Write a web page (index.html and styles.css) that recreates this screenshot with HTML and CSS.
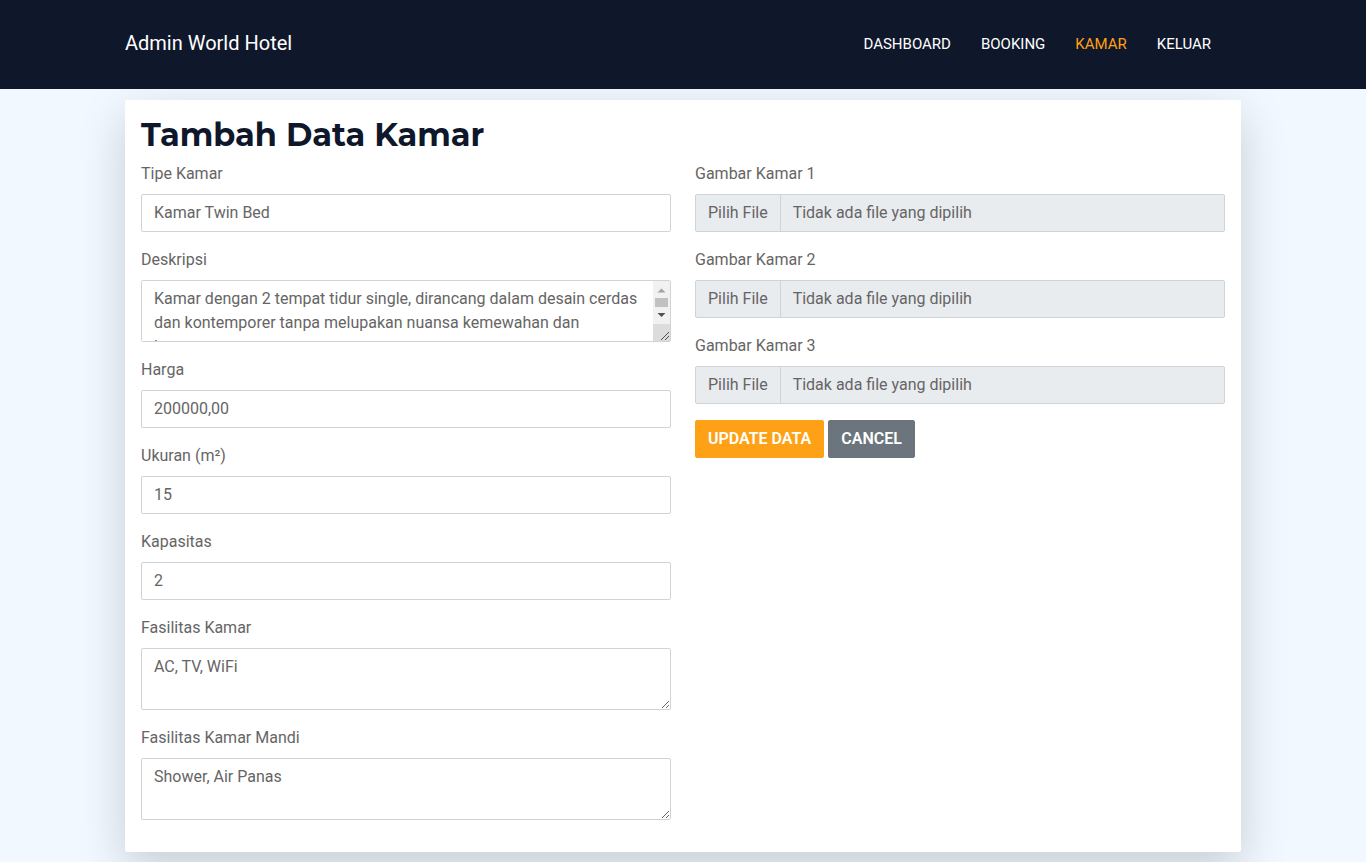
FILE: index.html
```html
<!DOCTYPE html>
<html lang="id">
<head>
<meta charset="utf-8">
<meta name="viewport" content="width=device-width, initial-scale=1">
<title>Admin World Hotel</title>
<link rel="stylesheet" href="styles.css">
</head>
<body>
<header class="site-header">
  <div class="container site-header-inner">
    <a class="brand" href="#">Admin World Hotel</a>
    <nav class="nav">
      <a class="nav-link" href="#">Dashboard</a>
      <a class="nav-link" href="#">Booking</a>
      <a class="nav-link active" href="#">Kamar</a>
      <a class="nav-link" href="#">Keluar</a>
    </nav>
  </div>
</header>
<main class="container">
  <section class="card">
    <h1 class="title">Tambah Data Kamar</h1>
    <form class="form">
      <div class="column">
        <div class="field">
          <label for="tipe">Tipe Kamar</label>
          <input class="control" id="tipe" type="text" value="Kamar Twin Bed">
        </div>
        <div class="field">
          <label for="deskripsi">Deskripsi</label>
          <div class="scroll-box">
            <textarea class="control area scrolling" id="deskripsi">Kamar dengan 2 tempat tidur single, dirancang dalam desain cerdas dan kontemporer tanpa melupakan nuansa kemewahan dan kenyamanan.</textarea>
            <svg class="scrollbar" width="17" height="60" viewBox="0 0 17 60" aria-hidden="true">
              <rect width="17" height="43" fill="#f1f1f1"/>
              <path d="M4.500 11.500L8.500 7.500L12.500 11.500Z" fill="#a3a3a3"/>
              <rect x="2" y="17" width="13" height="9" fill="#c1c1c1"/>
              <path d="M4.500 32L12.500 32L8.500 36Z" fill="#505050"/>
              <rect y="43" width="17" height="17" fill="#dcdcdc"/>
              <path d="M8 59L16 51M12 59L16 55" stroke="#505050" fill="none"/>
            </svg>
          </div>
        </div>
        <div class="field">
          <label for="harga">Harga</label>
          <input class="control" id="harga" type="text" value="200000,00">
        </div>
        <div class="field">
          <label for="ukuran">Ukuran (m²)</label>
          <input class="control" id="ukuran" type="text" value="15">
        </div>
        <div class="field">
          <label for="kapasitas">Kapasitas</label>
          <input class="control" id="kapasitas" type="text" value="2">
        </div>
        <div class="field">
          <label for="fasilitas">Fasilitas Kamar</label>
          <textarea class="control area" id="fasilitas">AC, TV, WiFi</textarea>
        </div>
        <div class="field">
          <label for="mandi">Fasilitas Kamar Mandi</label>
          <textarea class="control area" id="mandi">Shower, Air Panas</textarea>
        </div>
      </div>
      <div class="column">
        <div class="field">
          <label for="gambar1">Gambar Kamar 1</label>
          <div class="file">
            <span class="file-button">Pilih File</span>
            <span class="file-name">Tidak ada file yang dipilih</span>
            <input class="file-input" id="gambar1" type="file" disabled>
          </div>
        </div>
        <div class="field">
          <label for="gambar2">Gambar Kamar 2</label>
          <div class="file">
            <span class="file-button">Pilih File</span>
            <span class="file-name">Tidak ada file yang dipilih</span>
            <input class="file-input" id="gambar2" type="file" disabled>
          </div>
        </div>
        <div class="field">
          <label for="gambar3">Gambar Kamar 3</label>
          <div class="file">
            <span class="file-button">Pilih File</span>
            <span class="file-name">Tidak ada file yang dipilih</span>
            <input class="file-input" id="gambar3" type="file" disabled>
          </div>
        </div>
        <div class="actions">
          <button class="btn btn-primary" type="submit">Update Data</button>
          <button class="btn btn-secondary" type="button">Cancel</button>
        </div>
      </div>
    </form>
  </section>
</main>
</body>
</html>
```

FILE: styles.css
```css
*,
*::before,
*::after {
  box-sizing: border-box;
}

body {
  margin: 0;
  background: #f1f8ff;
  color: #666565;
  font-family: Roboto, "Liberation Sans", sans-serif;
  font-size: 16px;
  line-height: 24px;
}

.container {
  width: 100%;
  max-width: 1140px;
  margin: 0 auto;
  padding: 0 12px;
}

.site-header {
  position: relative;
  z-index: 1;
  background: #0f172b;
  padding: 24px 0 25px;
}

.site-header-inner {
  display: flex;
  flex-wrap: wrap;
  align-items: center;
  justify-content: space-between;
}

.brand {
  padding-bottom: 2px;
  color: #fff;
  font-size: 20px;
  line-height: 38px;
  text-decoration: none;
}

.nav {
  display: flex;
  flex-wrap: wrap;
  gap: 30px;
  margin-right: 30px;
}

.nav-link {
  color: #fff;
  font-size: 15px;
  font-weight: 400;
  text-decoration: none;
  text-transform: uppercase;
}

.nav-link.active {
  color: #fea116;
}

.card {
  margin: 11px 0 48px;
  padding: 16px;
  background: #fff;
  border-radius: 2px;
  box-shadow: 0 16px 48px rgba(0, 0, 0, 0.175);
}

.title {
  margin: 0 0 8px;
  color: #0f172b;
  font-family: Montserrat, Inter, sans-serif;
  font-size: 32px;
  font-weight: 700;
  line-height: 38px;
}

.form {
  display: grid;
  grid-template-columns: repeat(auto-fit, minmax(320px, 1fr));
  gap: 0 24px;
}

.field {
  display: flex;
  flex-direction: column;
  gap: 8px;
  margin-bottom: 16px;
}

.control {
  display: block;
  width: 100%;
  height: 38px;
  margin: 0;
  padding: 5px 12px 7px;
  border: 1px solid #ced4da;
  border-radius: 2px;
  background: #fff;
  color: #666565;
  font: inherit;
}

.area {
  height: 62px;
  padding: 6px 12px;
  resize: vertical;
}

.scroll-box {
  position: relative;
}

.scrolling {
  padding-right: 29px;
  overflow-y: scroll;
  resize: none;
  scrollbar-width: none;
}

.scrollbar {
  position: absolute;
  top: 1px;
  right: 1px;
  pointer-events: none;
}

.file {
  position: relative;
  display: flex;
  border: 1px solid #ced4da;
  border-radius: 2px;
  background: #e9ecef;
}

.file-button {
  padding: 6px 12px;
  border-right: 1px solid #ced4da;
}

.file-name {
  padding: 6px 12px;
}

.file-input {
  position: absolute;
  inset: 0;
  width: 100%;
  opacity: 0;
}

.actions {
  display: flex;
  flex-wrap: wrap;
  gap: 4px;
}

.btn {
  padding: 6px 12px;
  border: 1px solid transparent;
  border-radius: 2px;
  color: #fff;
  font: inherit;
  font-weight: 600;
  text-transform: uppercase;
}

.btn-primary {
  background: #fea116;
  border-color: #fea116;
}

.btn-secondary {
  background: #6c757d;
  border-color: #6c757d;
}
```
